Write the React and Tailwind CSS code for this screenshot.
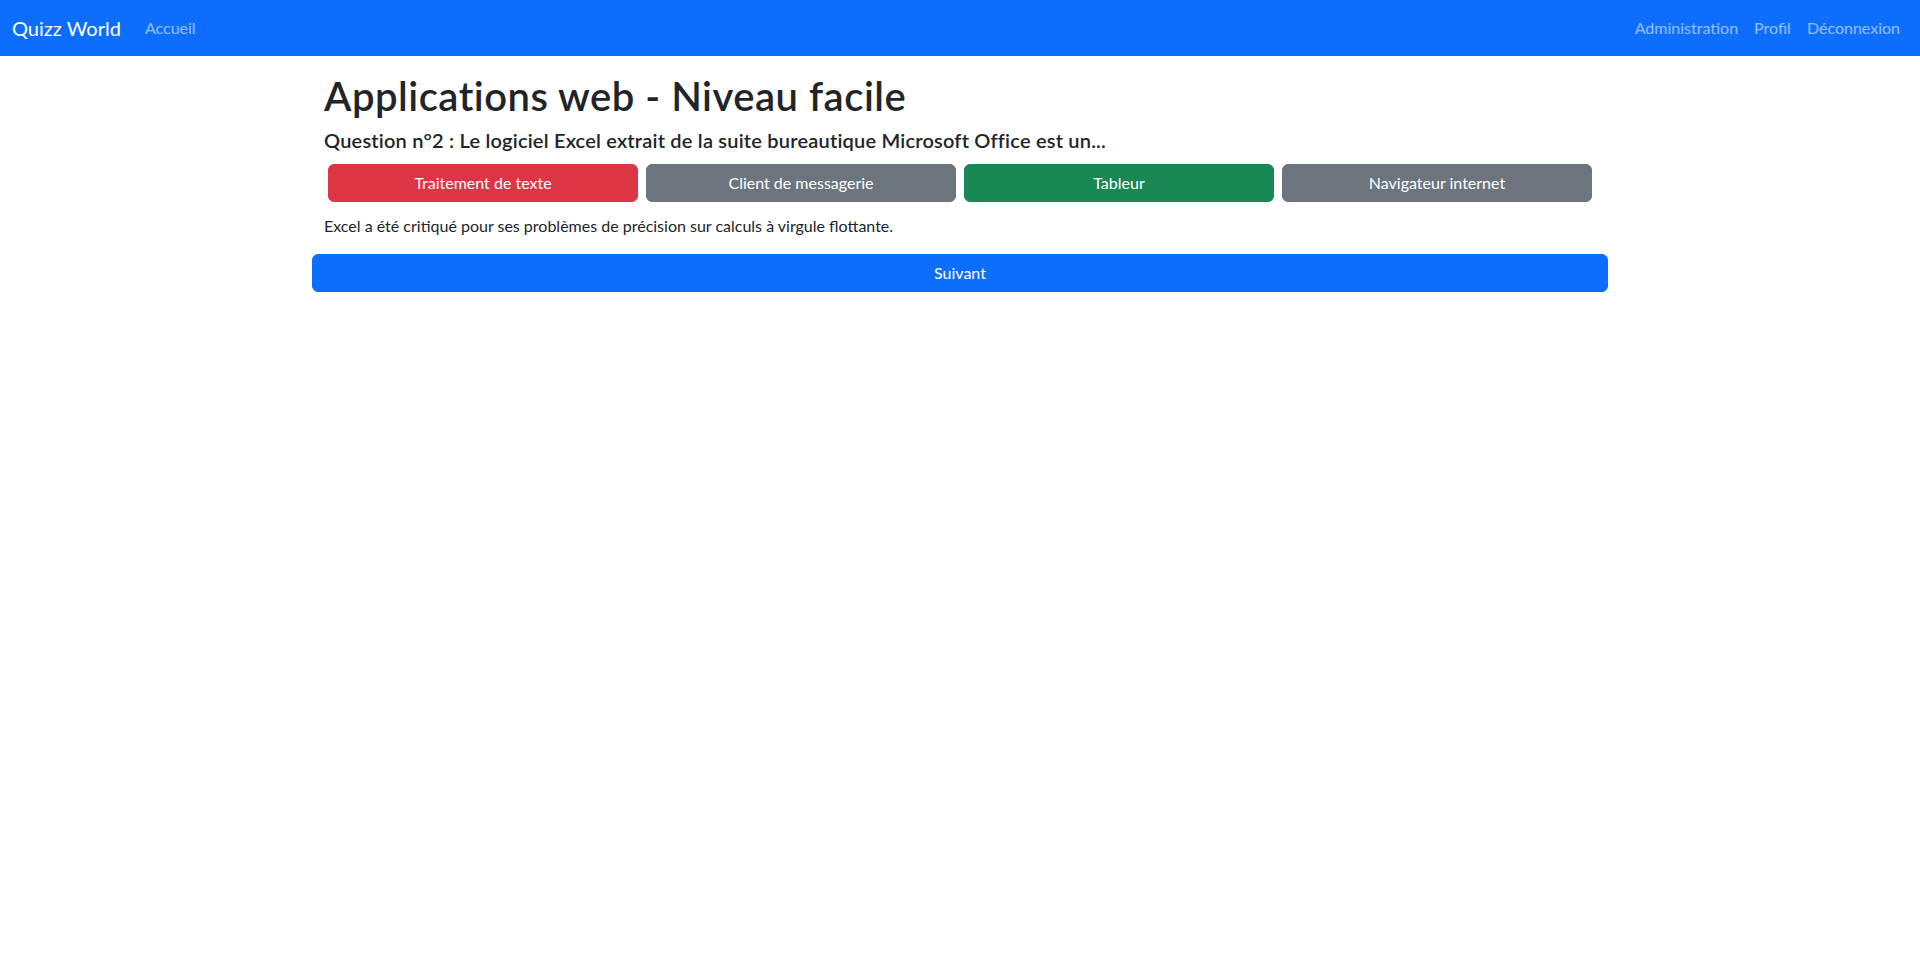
import React from "react";

const answers = [
  { label: "Traitement de texte", cls: "bg-[#dc3545] border-[#dc3545]" },
  { label: "Client de messagerie", cls: "bg-[#6c757d] border-[#6c757d]" },
  { label: "Tableur", cls: "bg-[#198754] border-[#198754]" },
  { label: "Navigateur internet", cls: "bg-[#6c757d] border-[#6c757d]" },
];

export default function App() {
  return (
    <div
      className="min-h-screen bg-white text-[#212529]"
      style={{ fontFamily: "Lato, 'Open Sans', sans-serif" }}
    >
      <nav className="h-14 bg-[#0d6efd] flex items-center justify-between px-3">
        <div className="flex items-center">
          <a href="#" className="text-xl leading-[30px] py-[5px] mr-4 text-white">
            Quizz World
          </a>
          <a href="#" className="px-2 py-2 text-base leading-6 text-white/55">
            Accueil
          </a>
        </div>
        <div className="flex items-center">
          <a href="#" className="px-2 py-2 text-base leading-6 text-white/55">
            Administration
          </a>
          <a href="#" className="px-2 py-2 text-base leading-6 text-white/55">
            Profil
          </a>
          <a href="#" className="px-2 py-2 text-base leading-6 text-white/55">
            Déconnexion
          </a>
        </div>
      </nav>

      <main className="w-[1320px] mx-auto px-3 mt-4">
        <div className="px-3">
          <h1 className="text-[40px] leading-[48px] font-semibold tracking-[0.5px] mb-2">
            Applications web - Niveau facile
          </h1>
          <h5 className="text-xl leading-6 font-semibold tracking-[0.2px] mb-2">
            Question n°2 : Le logiciel Excel extrait de la suite bureautique Microsoft Office est un...
          </h5>
          <div className="grid grid-cols-4 gap-2 p-1">
            {answers.map((a) => (
              <button
                key={a.label}
                className={`h-[38px] rounded-md border text-white text-base leading-6 ${a.cls}`}
              >
                {a.label}
              </button>
            ))}
          </div>
          <p className="mt-2 mb-4 text-base leading-6">
            Excel a été critiqué pour ses problèmes de précision sur calculs à virgule flottante.
          </p>
        </div>
        <button className="w-full h-[38px] rounded-md border border-[#0d6efd] bg-[#0d6efd] text-white text-base leading-6">
          Suivant
        </button>
      </main>
    </div>
  );
}
